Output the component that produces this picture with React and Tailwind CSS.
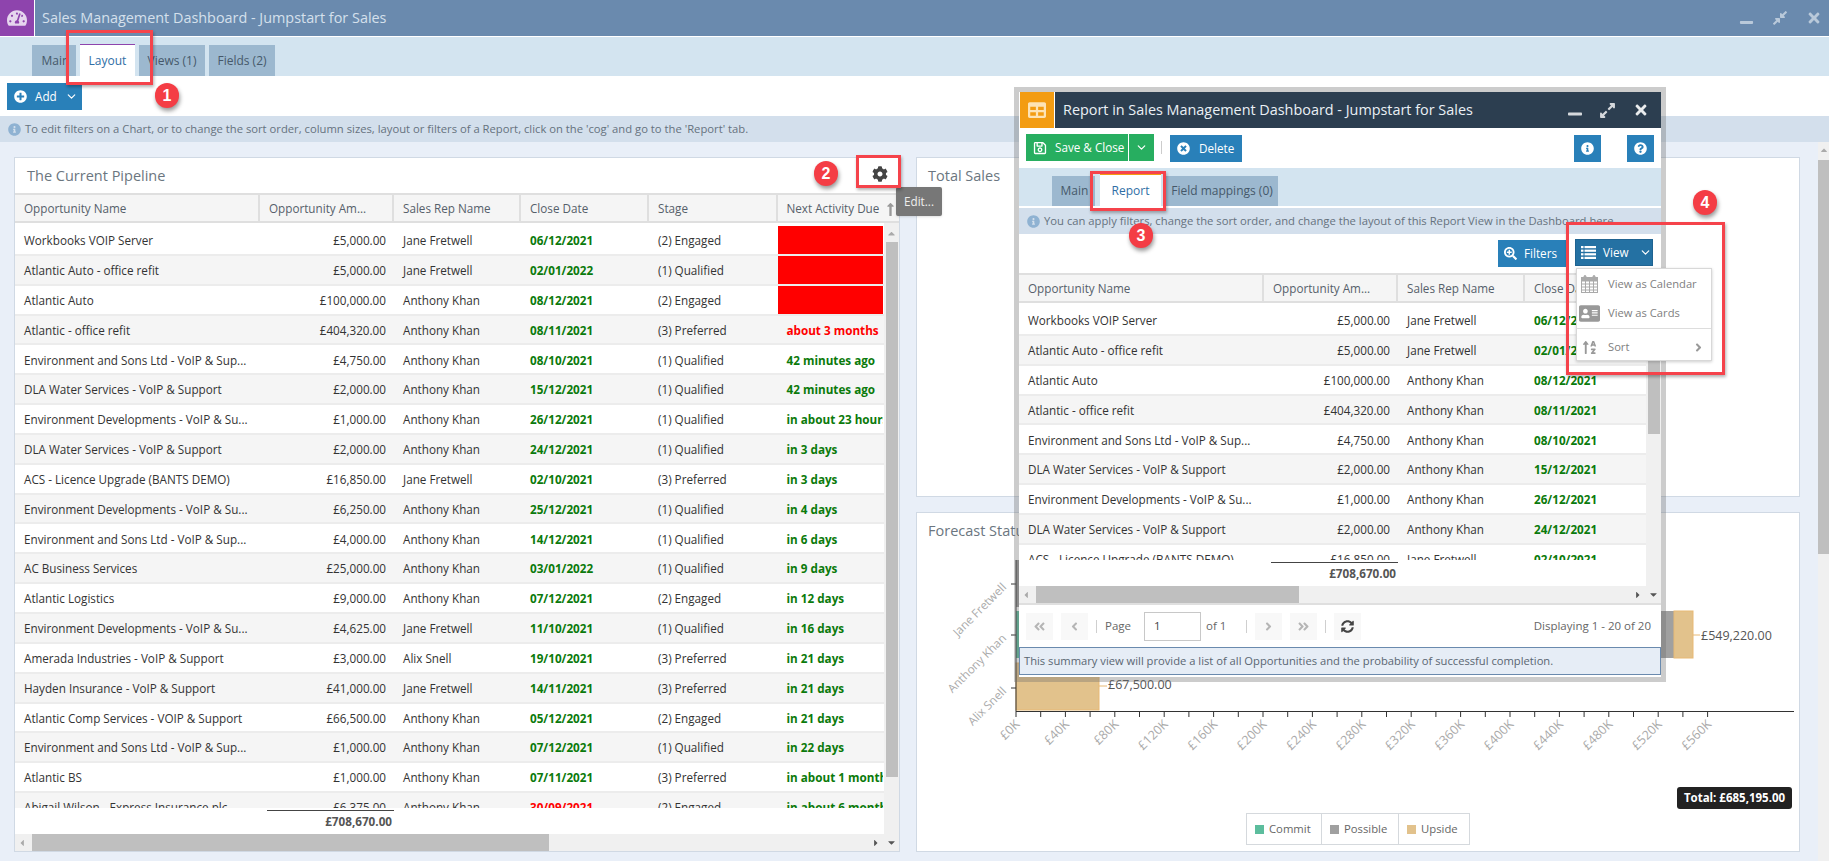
import React from "react";
import { ChevronDown } from "lucide-react";
import {
  FaTachometerAlt,
  FaPlusCircle,
  FaInfoCircle,
  FaCog,
  FaLongArrowAltUp,
  FaTable,
  FaRegSave,
  FaTimesCircle,
  FaQuestionCircle,
  FaSearchPlus,
  FaAddressCard,
  FaSortAlphaUp,
  FaAngleDoubleLeft,
  FaAngleLeft,
  FaAngleRight,
  FaAngleDoubleRight,
  FaSyncAlt,
  FaTimes,
  FaMinus,
  FaExpandAlt,
  FaCompressAlt,
  FaCaretUp,
  FaCaretDown,
  FaCaretLeft,
  FaCaretRight,
} from "react-icons/fa";

const rows = [
  ["Workbooks VOIP Server", "£5,000.00", "Jane Fretwell", "06/12/2021", "(2) Engaged", null],
  ["Atlantic Auto - office refit", "£5,000.00", "Jane Fretwell", "02/01/2022", "(1) Qualified", null],
  ["Atlantic Auto", "£100,000.00", "Anthony Khan", "08/12/2021", "(2) Engaged", null],
  ["Atlantic - office refit", "£404,320.00", "Anthony Khan", "08/11/2021", "(3) Preferred", "about 3 months"],
  ["Environment and Sons Ltd - VoIP & Sup...", "£4,750.00", "Anthony Khan", "08/10/2021", "(1) Qualified", "42 minutes ago"],
  ["DLA Water Services - VoIP & Support", "£2,000.00", "Anthony Khan", "15/12/2021", "(1) Qualified", "42 minutes ago"],
  ["Environment Developments - VoIP & Su...", "£1,000.00", "Anthony Khan", "26/12/2021", "(1) Qualified", "in about 23 hours"],
  ["DLA Water Services - VoIP & Support", "£2,000.00", "Anthony Khan", "24/12/2021", "(1) Qualified", "in 3 days"],
  ["ACS - Licence Upgrade (BANTS DEMO)", "£16,850.00", "Jane Fretwell", "02/10/2021", "(3) Preferred", "in 3 days"],
  ["Environment Developments - VoIP & Su...", "£6,250.00", "Anthony Khan", "25/12/2021", "(1) Qualified", "in 4 days"],
  ["Environment and Sons Ltd - VoIP & Sup...", "£4,000.00", "Anthony Khan", "14/12/2021", "(1) Qualified", "in 6 days"],
  ["AC Business Services", "£25,000.00", "Anthony Khan", "03/01/2022", "(1) Qualified", "in 9 days"],
  ["Atlantic Logistics", "£9,000.00", "Anthony Khan", "07/12/2021", "(2) Engaged", "in 12 days"],
  ["Environment Developments - VoIP & Su...", "£4,625.00", "Jane Fretwell", "11/10/2021", "(1) Qualified", "in 16 days"],
  ["Amerada Industries - VoIP & Support", "£3,000.00", "Alix Snell", "19/10/2021", "(3) Preferred", "in 21 days"],
  ["Hayden Insurance - VoIP & Support", "£41,000.00", "Jane Fretwell", "14/11/2021", "(3) Preferred", "in 21 days"],
  ["Atlantic Comp Services - VOIP & Support", "£66,500.00", "Anthony Khan", "05/12/2021", "(2) Engaged", "in 21 days"],
  ["Environment and Sons Ltd - VoIP & Sup...", "£1,000.00", "Anthony Khan", "07/12/2021", "(1) Qualified", "in 22 days"],
  ["Atlantic BS", "£1,000.00", "Anthony Khan", "07/11/2021", "(3) Preferred", "in about 1 month"],
  ["Abigail Wilson - Express Insurance plc", "£6,375.00", "Anthony Khan", "30/09/2021", "(2) Engaged", "in about 6 months"],
];

function Tab({ label, active, accent, className }) {
  if (active) {
    return (
      <div className={`flex items-center justify-center bg-white border-t ${accent} text-[#2f6ea5] text-[12px] ${className}`}>
        {label}
      </div>
    );
  }
  return (
    <div className={`flex items-center justify-center bg-[#9cb8cf] text-[#46586a] text-[12px] whitespace-nowrap overflow-hidden ${className}`}>
      {label}
    </div>
  );
}

function Cell({ children, className = "" }) {
  return <div className={`flex items-center pl-[9px] pt-[2px] whitespace-nowrap overflow-hidden text-[11.7px] ${className}`}>{children}</div>;
}

function ListIcon() {
  return (
    <svg width="15" height="13" viewBox="0 0 15 13" fill="currentColor">
      <rect x="0" y="0" width="2.5" height="2.2" />
      <rect x="3.5" y="0" width="11.5" height="2.2" />
      <rect x="0" y="3.6" width="2.5" height="2.2" />
      <rect x="3.5" y="3.6" width="11.5" height="2.2" />
      <rect x="0" y="7.2" width="2.5" height="2.2" />
      <rect x="3.5" y="7.2" width="11.5" height="2.2" />
      <rect x="0" y="10.8" width="2.5" height="2.2" />
      <rect x="3.5" y="10.8" width="11.5" height="2.2" />
    </svg>
  );
}

function CalendarIcon() {
  return (
    <svg width="17" height="18" viewBox="0 0 17 18" fill="none" stroke="#aaa">
      <rect x="0.5" y="2.5" width="16" height="15" fill="#fff" />
      <rect x="0.5" y="2.5" width="16" height="3.5" fill="#aaa" />
      <path d="M4.5 6v11.5M8.5 6v11.5M12.5 6v11.5M.5 9h16M.5 12h16M.5 15h16" />
      <rect x="3" y="0.5" width="2" height="4" rx="1" fill="#aaa" />
      <rect x="12" y="0.5" width="2" height="4" rx="1" fill="#aaa" />
    </svg>
  );
}

function DataTable({ cols, data, bodyHeight, full, thumb, hthumb }) {
  return (
    <div className="flex flex-col">
      <div className={`grid ${cols} h-[30px] bg-[#f5f5f5] border-y-2 border-[#dfdfdf] text-[#55606a] relative`}>
        <Cell className="border-r-2 border-[#dfdfdf]">Opportunity Name</Cell>
        <Cell className="border-r-2 border-[#dfdfdf]">Opportunity Am...</Cell>
        <Cell className="border-r-2 border-[#dfdfdf]">Sales Rep Name</Cell>
        <Cell className={full ? "border-r-2 border-[#dfdfdf]" : ""}>Close Date</Cell>
        {full && <Cell className="border-r-2 border-[#dfdfdf]">Stage</Cell>}
        {full && <Cell>Next Activity Due</Cell>}
        {full && <FaLongArrowAltUp className="absolute right-[1px] top-[7px] text-[#9a9a9a] text-[15px]" />}
      </div>
      <div className="flex">
        <div className="flex-1 min-w-0 flex flex-col">
          <div className="overflow-hidden pt-[3px]" style={{ height: bodyHeight }}>
            {data.map((r, i) => (
              <div key={i} className={`grid ${cols} h-[29.85px] border-b-2 border-[#ececec] text-[#333] ${i % 2 ? "bg-[#f5f5f5]" : "bg-white"}`}>
                <Cell>{r[0]}</Cell>
                <Cell className="justify-end pr-2">{r[1]}</Cell>
                <Cell>{r[2]}</Cell>
                <Cell className="font-bold">
                  <span className={r[3] === "30/09/2021" ? "text-[#ff0000]" : "text-[#0b7a0b]"}>{r[3]}</span>
                </Cell>
                {full && <Cell>{r[4]}</Cell>}
                {full &&
                  (r[5] ? (
                    <Cell className={`font-bold ${r[5] === "about 3 months" ? "text-[#ff0000]" : "text-[#0b7a0b]"}`}>{r[5]}</Cell>
                  ) : (
                    <div className="bg-[#ff0000]" />
                  ))}
              </div>
            ))}
          </div>
          <div className={`grid ${cols} h-[26px] bg-white`}>
            <div />
            <div className="border-t border-[#444] mt-[2px] ml-[7px] text-right pr-[2px] pt-[2px] text-[11.7px] font-bold text-[#555]">£708,670.00</div>
          </div>
          <div className="h-[17px] bg-[#f0f0f0] flex items-center relative">
            <FaCaretLeft className="absolute left-[2px] text-[#aaa] text-[10px]" />
            <div className={`absolute left-[17px] top-0 h-full bg-[#bfbfbf] ${hthumb}`} />
            <FaCaretRight className="absolute right-[3px] text-[#555] text-[10px]" />
          </div>
        </div>
        <div className="w-[15px] bg-[#f0f0f0] relative">
          <FaCaretUp className="absolute left-[2px] top-[5px] text-[#aaa] text-[11px]" />
          <div className={`absolute left-[2px] right-[1px] bg-[#bfbfbf] ${thumb}`} />
          <FaCaretDown className="absolute left-[2px] bottom-[3px] text-[#555] text-[11px]" />
        </div>
      </div>
    </div>
  );
}

function Badge({ n, className }) {
  return (
    <div className={`absolute w-[24px] h-[25px] rounded-full bg-[#f43d45] text-white font-bold text-[16px] flex items-center justify-center shadow-[1px_3px_4px_rgba(0,0,0,0.4)] font-['Liberation_Sans',sans-serif] ${className}`}>
      {n}
    </div>
  );
}

function RedBox({ className }) {
  return <div className={`absolute border-[3px] border-[#f5434b] shadow-[1px_2px_3px_rgba(0,0,0,0.3)] ${className}`} />;
}

function PagerBtn({ children, dim }) {
  return (
    <div className={`w-[27px] h-[27px] flex items-center justify-center bg-[#f8f8f8] text-[13px] ${dim ? "text-[#b5b5b5]" : "text-[#444]"}`}>
      {children}
    </div>
  );
}

function Sep({ className = "" }) {
  return <div className={`w-px h-[13px] bg-[#cfcfcf] ${className}`} />;
}

function Chart() {
  const ticks = [];
  for (let i = 0; i <= 28; i++) ticks.push(i);
  const px = (x) => x - 916;
  const py = (y) => y - 512;
  return (
    <svg className="absolute inset-0" width="885" height="340">
      <g fontFamily="'Open Sans', sans-serif">
        <rect x={px(1015)} y={py(559)} width="300" height="47" fill="#9a9a9a" />
        <rect x={px(1015)} y={py(610)} width="400" height="47" fill="#5cbd9d" />
        <rect x={px(1415)} y={py(610)} width="258" height="47" fill="#a0a0a0" />
        <rect x={px(1673)} y={py(610)} width="19" height="47" fill="#e2c28c" stroke="#e8b974" />
        <rect x={px(1015)} y={py(662)} width="83" height="47" fill="#e2c28c" stroke="#e8b974" />
        <line x1={px(1692)} x2={px(1699)} y1={py(634)} y2={py(634)} stroke="#e8b974" />
        <line x1={px(1098)} x2={px(1106)} y1={py(685)} y2={py(685)} stroke="#e8b974" />
        <text x={px(1700)} y={py(639)} fontSize="12.5" fill="#555">£549,220.00</text>
        <text x={px(1107)} y={py(688)} fontSize="12.5" fill="#555">£67,500.00</text>
        <line x1={px(1015)} x2={px(1015)} y1={py(559)} y2={py(711)} stroke="#333" />
        <line x1={px(1015)} x2={px(1793)} y1={py(710.5)} y2={py(710.5)} stroke="#333" strokeWidth="1.2" />
        {[583, 634, 687].map((y) => (
          <line key={y} x1={px(1010)} x2={px(1015)} y1={py(y)} y2={py(y)} stroke="#333" />
        ))}
        {[
          ["Jane Fretwell", 587],
          ["Anthony Khan", 638],
          ["Alix Snell", 691],
        ].map(([t, y]) => (
          <text key={t} transform={`translate(${px(1006)},${py(y)}) rotate(-45)`} textAnchor="end" fontSize="11.7" fill="#aaa">
            {t}
          </text>
        ))}
        {ticks.map((i) => (
          <line key={i} x1={px(1015) + i * 24.7} x2={px(1015) + i * 24.7} y1={py(711)} y2={py(716)} stroke="#333" />
        ))}
        {ticks
          .filter((i) => i % 2 === 0)
          .map((i) => (
            <text key={i} transform={`translate(${px(1019.5) + i * 24.7},${py(724)}) rotate(-45)`} textAnchor="end" fontSize="12.5" fill="#aaa">
              {`£${i * 20}K`}
            </text>
          ))}
      </g>
    </svg>
  );
}

export default function App() {
  return (
    <div className="relative w-[1829px] h-[861px] overflow-hidden flex flex-col bg-white font-['Open_Sans',sans-serif]">
      {/* main window header */}
      <div className="h-[37px] flex bg-[#6a8aae] border-b border-white shrink-0">
        <div className="w-[35px] bg-[#8e44ad] border-r border-white flex items-center justify-center text-[#e6d6ee] text-[20px]">
          <FaTachometerAlt />
        </div>
        <div className="ml-[7px] flex items-center text-[14.4px] text-[#d5e0ec]">Sales Management Dashboard - Jumpstart for Sales</div>
        <div className="ml-auto flex items-center text-[#b9c9da]">
          <FaMinus className="absolute left-[1739px] top-[15px] text-[15px]" />
          <FaCompressAlt className="absolute left-[1772px] top-[10px] text-[16px]" />
          <FaTimes className="absolute left-[1806px] top-[10px] text-[16px]" />
        </div>
      </div>
      <div className="h-[39px] bg-[#d3e4f0] flex items-end pl-[32px] gap-[4px] shrink-0">
        <Tab label="Main" className="w-[44px] h-[31px] pl-[3px]" />
        <Tab label="Layout" active accent="border-[#8e44ad]" className="w-[55px] h-[32px]" />
        <Tab label="Views (1)" className="w-[66px] h-[31px]" />
        <Tab label="Fields (2)" className="w-[66px] h-[31px]" />
      </div>
      <div className="h-[40px] pl-[7px] pt-[7px] shrink-0">
        <div className="w-[75px] h-[27px] bg-[#2980b9] text-white text-[11.7px] flex items-center pl-[7px] gap-[8px]">
          <FaPlusCircle className="text-[13px]" />
          <span>Add</span>
          <ChevronDown size={13} strokeWidth={2.2} />
        </div>
      </div>
      <div className="h-[26px] bg-[#d3dfec] flex items-center pl-[8px] gap-[4px] text-[11.25px] text-[#66727e] shrink-0">
        <FaInfoCircle className="text-[#8fb2d2] text-[13px]" />
        To edit filters on a Chart, or to change the sort order, column sizes, layout or filters of a Report, click on the 'cog' and go to the 'Report' tab.
      </div>

      {/* dashboard */}
      <div className="flex-1 bg-[#e9eff8] flex min-h-0">
        <div className="flex-1 flex gap-[16px] pl-[14px] pt-[15px] pb-[9px] pr-[18px]">
          <div className="w-[886px] bg-white border border-[#d0d9e4] flex flex-col">
            <div className="h-[35px] flex items-center pl-[12px] text-[14.5px] text-[#6b7680] relative">
              The Current Pipeline
              <FaCog className="absolute left-[857px] top-[8px] text-[#444] text-[16px]" />
            </div>
            <DataTable
              cols="grid-cols-[245px_134px_127px_128px_128.5px_105.5px]"
              data={rows}
              bodyHeight={585}
              full
              thumb="top-[19px] h-[535px]"
              hthumb="w-[517px]"
            />
          </div>
          <div className="flex-1 flex flex-col gap-[15px]">
            <div className="h-[340px] bg-white border border-[#d0d9e4] pl-[11px] pt-[7px] text-[14.5px] text-[#6b7680]">Total Sales</div>
            <div className="flex-1 bg-white border border-[#d0d9e4] pl-[11px] pt-[7px] text-[14.5px] text-[#6b7680] relative">
              Forecast Status
              <Chart />
              <div className="absolute right-[7px] bottom-[42px] w-[115px] h-[22px] rounded-[3px] bg-[#222] text-white font-bold text-[11.5px] flex items-center justify-center">
                Total: £685,195.00
              </div>
              <div className="absolute bottom-[6px] left-1/2 -translate-x-1/2 h-[32px] flex border border-[#d5d9dd] bg-white text-[11.3px] text-[#666]">
                <div className="w-[75px] flex items-center pl-[8px] gap-[5px] border-r border-[#d5d9dd]"><span className="w-[9px] h-[9px] bg-[#5cbd9d]" />Commit</div>
                <div className="w-[77px] flex items-center pl-[8px] gap-[5px] border-r border-[#d5d9dd]"><span className="w-[9px] h-[9px] bg-[#a0a0a0]" />Possible</div>
                <div className="w-[70px] flex items-center pl-[8px] gap-[5px]"><span className="w-[9px] h-[9px] bg-[#e2c28c]" />Upside</div>
              </div>
            </div>
          </div>
        </div>
        <div className="w-[11px] bg-[#f0f0f0] relative">
          <FaCaretUp className="absolute left-[1px] top-[3px] text-[#aaa] text-[10px]" />
          <div className="absolute left-0 right-0 top-[18px] h-[394px] bg-[#bfbfbf]" />
        </div>
      </div>

      {/* report window */}
      <div className="absolute left-[1014px] top-[87px] w-[652px] h-[595px] border-[5px] border-[rgba(110,110,110,0.35)] bg-white bg-clip-padding flex flex-col">
        <div className="h-[36px] flex shrink-0 pl-px">
          <div className="w-[34px] bg-[#f39c12] flex items-center justify-center text-[#fde3b5] text-[18px]">
            <FaTable />
          </div>
          <div className="flex-1 ml-px bg-[#2c3e50] flex items-center pl-[8px] text-[14.4px] text-[#eaf0f5] relative">
            Report in Sales Management Dashboard - Jumpstart for Sales
            <FaMinus className="absolute left-[512px] top-[14px] text-white/80 text-[16px]" />
            <FaExpandAlt className="absolute left-[544px] top-[10px] text-white/80 text-[17px]" />
            <FaTimes className="absolute left-[578px] top-[10px] text-white/90 text-[16px]" />
          </div>
        </div>
        <div className="h-[40px] flex items-start pt-[6px] pl-[7px] shrink-0 relative">
          <div className="w-[102px] h-[27px] bg-[#27ae60] text-white text-[11.7px] flex items-center pl-[7px] gap-[8px]">
            <FaRegSave className="text-[14px]" />
            Save &amp; Close
          </div>
          <div className="ml-px w-[25px] h-[27px] bg-[#27ae60] text-white flex items-center justify-center">
            <ChevronDown size={13} strokeWidth={2.2} />
          </div>
          <div className="ml-[7px] mt-[7px] w-px h-[13px] bg-[#ccc]" />
          <div className="ml-[8px] mt-[1px] w-[72px] h-[27px] bg-[#2980b9] text-white text-[11.7px] flex items-center pl-[7px] gap-[9px]">
            <FaTimesCircle className="text-[13px]" />
            Delete
          </div>
          <div className="ml-auto mt-[1px] w-[27px] h-[27px] bg-[#2980b9] text-white flex items-center justify-center text-[13px]"><FaInfoCircle /></div>
          <div className="ml-[26px] mr-[7px] mt-[1px] w-[27px] h-[27px] bg-[#2980b9] text-white flex items-center justify-center text-[13px]"><FaQuestionCircle /></div>
        </div>
        <div className="h-[38px] bg-[#d3e4f0] flex items-end pl-[33px] gap-[5px] shrink-0">
          <Tab label="Main" className="w-[43px] h-[30px] pl-[2px]" />
          <Tab label="Report" active accent="border-[#f39c12]" className="w-[61px] h-[32px]" />
          <Tab label="Field mappings (0)" className="w-[112px] h-[30px]" />
        </div>
        <div className="h-[26px] mt-[2px] bg-[#d3dfec] flex items-center pl-[8px] gap-[4px] text-[11.25px] text-[#66727e] whitespace-nowrap shrink-0">
          <FaInfoCircle className="text-[#8fb2d2] text-[13px]" />
          You can apply filters, change the sort order, and change the layout of this Report View in the Dashboard here.
        </div>
        <div className="h-[39px] shrink-0 flex justify-end items-start pt-[6px] pr-[8px] gap-[9px]">
          <div className="w-[68px] h-[27px] bg-[#2980b9] text-white text-[11.7px] flex items-center pl-[6px] gap-[7px]">
            <FaSearchPlus className="text-[13px]" />
            Filters
          </div>
          <div className="-mt-px w-[78px] h-[27px] bg-[#2471a3] border border-[#1f6391] text-white text-[11.7px] flex items-center pl-[5px] gap-[7px]">
            <ListIcon />
            View
            <ChevronDown size={13} strokeWidth={2.2} className="ml-[3px]" />
          </div>
        </div>
        <DataTable
          cols="grid-cols-[245px_134px_127px_120px]"
          data={rows.slice(0, 9)}
          bodyHeight={257}
          thumb="top-[17px] h-[114px]"
          hthumb="w-[263px]"
        />
        <div className="h-[44px] shrink-0 border-t-2 border-[#dfdfdf] flex items-center pl-[7px] gap-[8px] text-[11.5px] text-[#666]">
          <PagerBtn dim><FaAngleDoubleLeft /></PagerBtn>
          <PagerBtn dim><FaAngleLeft /></PagerBtn>
          <Sep />
          <span>Page</span>
          <div className="ml-[5px] w-[57px] h-[29px] border border-[#c8c8c8] flex items-center pl-[9px] text-[#444]">1</div>
          <span className="-ml-[3px]">of 1</span>
          <Sep className="ml-[12px]" />
          <PagerBtn dim><FaAngleRight /></PagerBtn>
          <PagerBtn dim><FaAngleDoubleRight /></PagerBtn>
          <Sep />
          <PagerBtn><FaSyncAlt /></PagerBtn>
          <span className="ml-auto mr-[10px]">Displaying 1 - 20 of 20</span>
        </div>
        <div className="h-[28px] shrink-0 bg-[#e6edf6] border border-[#6a8aae] flex items-center pl-[4px] text-[11.2px] text-[#5a6672]">
          This summary view will provide a list of all Opportunities and the probability of successful completion.
        </div>
      </div>

      {/* view menu */}
      <div className="absolute left-[1576px] top-[268px] w-[136px] h-[93px] bg-white border border-[#d8d8d8] shadow-[0_1px_3px_rgba(0,0,0,0.2)] text-[11.2px] text-[#808080]">
        <div className="h-[30px] flex items-center pl-[2px] gap-[8px]"><span className="w-[21px] flex justify-center"><CalendarIcon /></span>View as Calendar</div>
        <div className="h-[29px] flex items-center pl-[2px] gap-[8px]"><span className="w-[21px] flex justify-center"><FaAddressCard className="text-[#999] text-[21px]" /></span>View as Cards</div>
        <div className="border-t border-[#ddd] h-[32px] flex items-center pt-[6px] pl-[2px] gap-[8px] relative">
          <span className="w-[21px] flex justify-center"><FaSortAlphaUp className="text-[#999] text-[15px]" /></span>
          Sort
          <FaAngleRight className="absolute right-[6px] text-[#999] text-[13px]" />
        </div>
      </div>

      {/* edit tooltip */}
      <div className="absolute left-[896px] top-[187px] w-[46px] h-[29px] bg-[#777] rounded-[2px] text-[#eee] text-[11.7px] flex items-center justify-center shadow-sm">
        Edit...
      </div>

      {/* callouts */}
      <RedBox className="left-[66px] top-[30px] w-[87px] h-[55px]" />
      <RedBox className="left-[856px] top-[155px] w-[45px] h-[33px]" />
      <RedBox className="left-[1090px] top-[171px] w-[76px] h-[40px]" />
      <RedBox className="left-[1566px] top-[222px] w-[159px] h-[153px]" />
      <Badge n="1" className="left-[155px] top-[83px]" />
      <Badge n="2" className="left-[814px] top-[161px]" />
      <Badge n="3" className="left-[1129px] top-[223px]" />
      <Badge n="4" className="left-[1693px] top-[190px]" />
    </div>
  );
}
